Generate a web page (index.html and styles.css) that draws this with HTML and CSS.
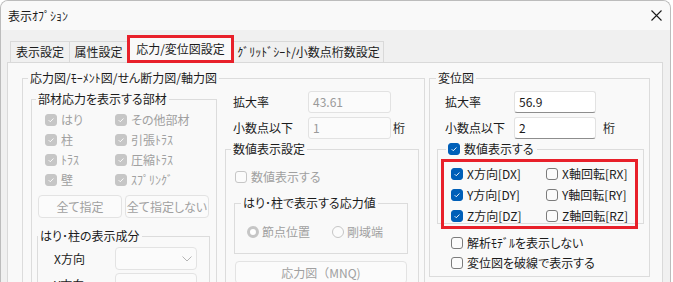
FILE: index.html
```html
<!DOCTYPE html>
<html lang="ja">
<head>
<meta charset="utf-8">
<title>表示ｵﾌﾟｼｮﾝ</title>
<link rel="stylesheet" href="styles.css">
</head>
<body>
<div class="window">
  <div class="titlebar">
    <span class="title">表示ｵﾌﾟｼｮﾝ</span>
    <svg class="close" width="11" height="11" viewBox="0 0 11 11"><path d="M0.5 0.5L10.5 10.5M10.5 0.5L0.5 10.5" stroke="#1a1a1a" stroke-width="1.1" fill="none"/></svg>
  </div>
  <div class="client">
    <div class="tabs">
      <div class="tab t1">表示設定</div>
      <div class="tab t2">属性設定</div>
      <div class="tab t3 sel">応力/変位図設定</div>
      <div class="tab t4">ｸﾞﾘｯﾄﾞｼｰﾄ/小数点桁数設定</div>
    </div>
    <div class="panel">
      <fieldset class="grp g-stress">
        <legend>応力図/ﾓｰﾒﾝﾄ図/せん断力図/軸力図</legend>
        <div class="stress-cols">
          <fieldset class="grp g-members">
            <legend>部材応力を表示する部材</legend>
            <div class="cbgrid">
              <label class="chk dis"><span class="cb on"><svg viewBox="0 0 12 12"><path d="M3.2 6.2L5.1 8.1L8.9 4.2"/></svg></span>はり</label>
              <label class="chk dis"><span class="cb on"><svg viewBox="0 0 12 12"><path d="M3.2 6.2L5.1 8.1L8.9 4.2"/></svg></span>その他部材</label>
              <label class="chk dis"><span class="cb on"><svg viewBox="0 0 12 12"><path d="M3.2 6.2L5.1 8.1L8.9 4.2"/></svg></span>柱</label>
              <label class="chk dis"><span class="cb on"><svg viewBox="0 0 12 12"><path d="M3.2 6.2L5.1 8.1L8.9 4.2"/></svg></span>引張ﾄﾗｽ</label>
              <label class="chk dis"><span class="cb on"><svg viewBox="0 0 12 12"><path d="M3.2 6.2L5.1 8.1L8.9 4.2"/></svg></span>ﾄﾗｽ</label>
              <label class="chk dis"><span class="cb on"><svg viewBox="0 0 12 12"><path d="M3.2 6.2L5.1 8.1L8.9 4.2"/></svg></span>圧縮ﾄﾗｽ</label>
              <label class="chk dis"><span class="cb on"><svg viewBox="0 0 12 12"><path d="M3.2 6.2L5.1 8.1L8.9 4.2"/></svg></span>壁</label>
              <label class="chk dis"><span class="cb on"><svg viewBox="0 0 12 12"><path d="M3.2 6.2L5.1 8.1L8.9 4.2"/></svg></span>ｽﾌﾟﾘﾝｸﾞ</label>
            </div>
            <div class="btnrow">
              <div class="btn dis">全て指定</div>
              <div class="btn dis">全て指定しない</div>
            </div>
            <fieldset class="grp g-comp">
              <legend>はり･柱の表示成分</legend>
              <div class="comprow">
                <span class="clabel">X方向</span>
                <div class="combo"><svg width="10" height="6" viewBox="0 0 10 6"><path d="M0.5 0.5L5 5L9.5 0.5" fill="none" stroke="#b5b5b5" stroke-width="1"/></svg></div>
              </div>
              <div class="comprow">
                <span class="clabel">Y方向</span>
                <div class="combo"><svg width="10" height="6" viewBox="0 0 10 6"><path d="M0.5 0.5L5 5L9.5 0.5" fill="none" stroke="#b5b5b5" stroke-width="1"/></svg></div>
              </div>
            </fieldset>
          </fieldset>
          <div class="midcol">
            <div class="frow"><span class="flabel">拡大率</span><div class="input dis">43.61</div></div>
            <div class="frow"><span class="flabel">小数点以下</span><div class="input dis">1</div><span class="unit">桁</span></div>
            <fieldset class="grp g-num">
              <legend>数値表示設定</legend>
              <label class="chk dis"><span class="cb"></span>数値表示する</label>
              <fieldset class="grp g-val">
                <legend>はり･柱で表示する応力値</legend>
                <div class="radios">
                  <label class="rad dis r1"><span class="rb on"></span>節点位置</label>
                  <label class="rad dis"><span class="rb"></span>剛域端</label>
                </div>
              </fieldset>
              <div class="btn dis wide">応力図（MNQ)</div>
            </fieldset>
          </div>
        </div>
      </fieldset>
      <fieldset class="grp g-disp">
        <legend>変位図</legend>
        <div class="frow"><span class="flabel">拡大率</span><div class="input">56.9</div></div>
        <div class="frow"><span class="flabel">小数点以下</span><div class="input">2</div><span class="unit">桁</span></div>
        <fieldset class="grp g-chk">
          <legend><label class="chk"><span class="cb on blue"><svg viewBox="0 0 12 12"><path d="M3.2 6.2L5.1 8.1L8.9 4.2"/></svg></span>数値表示する</label></legend>
          <div class="redgrid">
            <label class="chk"><span class="cb on blue"><svg viewBox="0 0 12 12"><path d="M3.2 6.2L5.1 8.1L8.9 4.2"/></svg></span>X方向[DX]</label>
            <label class="chk"><span class="cb"></span>X軸回転[RX]</label>
            <label class="chk"><span class="cb on blue"><svg viewBox="0 0 12 12"><path d="M3.2 6.2L5.1 8.1L8.9 4.2"/></svg></span>Y方向[DY]</label>
            <label class="chk"><span class="cb"></span>Y軸回転[RY]</label>
            <label class="chk"><span class="cb on blue"><svg viewBox="0 0 12 12"><path d="M3.2 6.2L5.1 8.1L8.9 4.2"/></svg></span>Z方向[DZ]</label>
            <label class="chk"><span class="cb"></span>Z軸回転[RZ]</label>
          </div>
        </fieldset>
        <div class="extra">
          <label class="chk"><span class="cb"></span>解析ﾓﾃﾞﾙを表示しない</label>
          <label class="chk"><span class="cb"></span>変位図を破線で表示する</label>
        </div>
      </fieldset>
    </div>
  </div>
</div>
</body>
</html>
```
FILE: styles.css
```css
* { box-sizing: border-box; }
html, body { margin: 0; padding: 0; background: #ffffff; }
body {
  width: 673px; height: 282px; overflow: hidden;
  font-family: "Noto Sans CJK JP", "Noto Sans", sans-serif;
  font-size: 12px; line-height: 16px; color: #1b1b1b;
  font-feature-settings: "palt" 1;
}
.window {
  width: 671px; height: 300px;
  border: 1px solid #bcbcbc; border-bottom: none;
  border-radius: 8px 8px 0 0;
  background: #f0f0f0; overflow: hidden;
}
.titlebar {
  height: 29px; background: #f9f9f9;
  display: flex; align-items: center; justify-content: space-between;
  padding: 0 8px 0 7px;
}
.close { display: block; }
.client { padding-top: 5px; }
.tabs {
  display: flex; align-items: flex-end;
  height: 27px; margin-left: 9px;
}
.tab {
  height: 21px; line-height: 19px; text-align: center; white-space: nowrap;
  border: 1px solid #d9d9d9; border-bottom: none;
  background: #f0f0f0; color: #1b1b1b;
}
.t1 { width: 60px; }
.t2 { width: 59px; margin-left: -1px; }
.t3 { width: 107px; margin-left: -1px; }
.t4 { width: 151px; margin-left: -1px; }
.tab.sel {
  height: 28px; line-height: 22px;
  border: 3px solid #e8202a;
  background: #f9f9f9; margin-bottom: -1px;
  position: relative; z-index: 2;
}
.panel {
  margin-left: 6px; width: 656px; height: 260px;
  border: 1px solid #d9d9d9; background: #f9f9f9;
  padding: 7px 0 0 14px;
  display: flex; gap: 4px; align-items: flex-start;
}
.grp {
  margin: 0; min-width: 0;
  border: 1px solid #dcdcdc; padding: 0;
}
.grp > legend { padding: 0 2px; line-height: 16px; height: 16px; white-space: nowrap; }

.g-stress { width: 403px; padding: 5px 5px 0 8px; }
.g-stress > legend { margin-left: -3px; }
.stress-cols { display: flex; gap: 8px; align-items: flex-start; }

.g-members { width: 186px; padding: 3px 0 0 5px; }
.g-members > legend { margin-left: -1px; }
.cbgrid {
  display: grid; grid-template-columns: 70px 70px; grid-auto-rows: 20px;
  margin-left: 8px;
}
.chk { display: flex; align-items: center; gap: 4px; height: 20px; white-space: nowrap; }
.chk.dis { color: #a0a0a0; }
.cb {
  width: 12px; height: 12px; flex: none; border-radius: 3px;
  border: 1px solid #7c7c7c; background: #fbfbfb;
  display: flex; align-items: center; justify-content: center;
}
.cb svg { width: 12px; height: 12px; display: block; }
.cb svg path { fill: none; stroke: #ffffff; stroke-width: 1.1; }
.chk.dis .cb { border-color: #c6c6c6; background: #fbfbfb; }
.chk.dis .cb.on { background: #c6c6c6; border-color: #c6c6c6; }
.cb.blue { background: #005fb8; border-color: #005fb8; }

.btnrow { display: flex; gap: 3px; margin: 5px 0 0 1px; }
.btn {
  width: 84px; height: 23px; line-height: 21px; text-align: center; white-space: nowrap;
  border: 1px solid #e3e3e3; border-radius: 4px; background: #fbfbfb;
}
.btn.dis { color: #a0a0a0; }
.btn.wide { width: 172px; margin-top: 7px; font-feature-settings: normal; }

.g-comp { width: 173px; margin-top: 10px; padding: 3px 0 0 0; }
.comprow { display: grid; grid-template-columns: 77px 82px; height: 23px; align-items: center; margin-bottom: 3px; }
.clabel { padding-left: 16px; }
.combo {
  height: 23px; border: 1px solid #e3e3e3; border-radius: 4px; background: #fbfbfb;
  display: flex; align-items: center; justify-content: flex-end; padding-right: 4px;
}
.combo svg { display: block; }

.midcol { width: 194px; }
.frow { display: flex; align-items: center; height: 22px; }
.frow + .frow { margin-top: 4px; }
.midcol .flabel { width: 83px; padding-left: 8px; }
.input {
  width: 83px; height: 22px; line-height: 20px; padding-left: 4px;
  border: 1px solid #e2e2e2; border-bottom-color: #8d8d8d; border-radius: 3px;
  background: #ffffff; color: #1b1b1b;
}
.input.dis { background: #fbfbfb; border-color: #e2e2e2; color: #9a9a9a; }
.unit { margin-left: 2px; }

.g-num { margin-top: 2px; padding: 10px 10px 0 9px; }
.g-num > legend { margin-left: -4px; }
.g-val { width: 174px; margin: 8px 0 0 -1px; padding: 11px 0 11px 12px; }
.g-val > legend { margin-left: -6px; }
.radios { display: flex; }
.rad { display: flex; align-items: center; gap: 3px; height: 20px; }
.rad.r1 { width: 85px; }
.rad.dis { color: #a0a0a0; }
.rb {
  width: 12px; height: 12px; border-radius: 50%; flex: none;
  border: 1px solid #c6c6c6; background: #fbfbfb;
}
.rb.on { border: 3px solid #c6c6c6; background: #ffffff; }

.g-disp { width: 221px; padding: 5px 0 3px 0; }
.g-disp > legend { margin-left: 6px; }
.g-disp .flabel { width: 84px; padding-left: 15px; }
.g-disp .input { width: 82px; }
.g-disp .unit { margin-left: 7px; }

.g-chk { width: 207px; margin: 2px 0 0 7px; padding: 2px 0 0 3px; }
.g-chk > legend { margin-left: 5px; padding: 0 3px 0 2px; }
.g-chk > legend .chk { height: 16px; gap: 4px; }
.redgrid {
  width: 197px; border: 3px solid #e8202a;
  padding: 1px 0 0 7px; margin-bottom: -6px;
  display: grid; grid-template-columns: 95px 88px; grid-auto-rows: 21px;
  position: relative;
}
.redgrid .chk { height: 21px; }
.extra { margin: 9px 0 0 21px; }
```
